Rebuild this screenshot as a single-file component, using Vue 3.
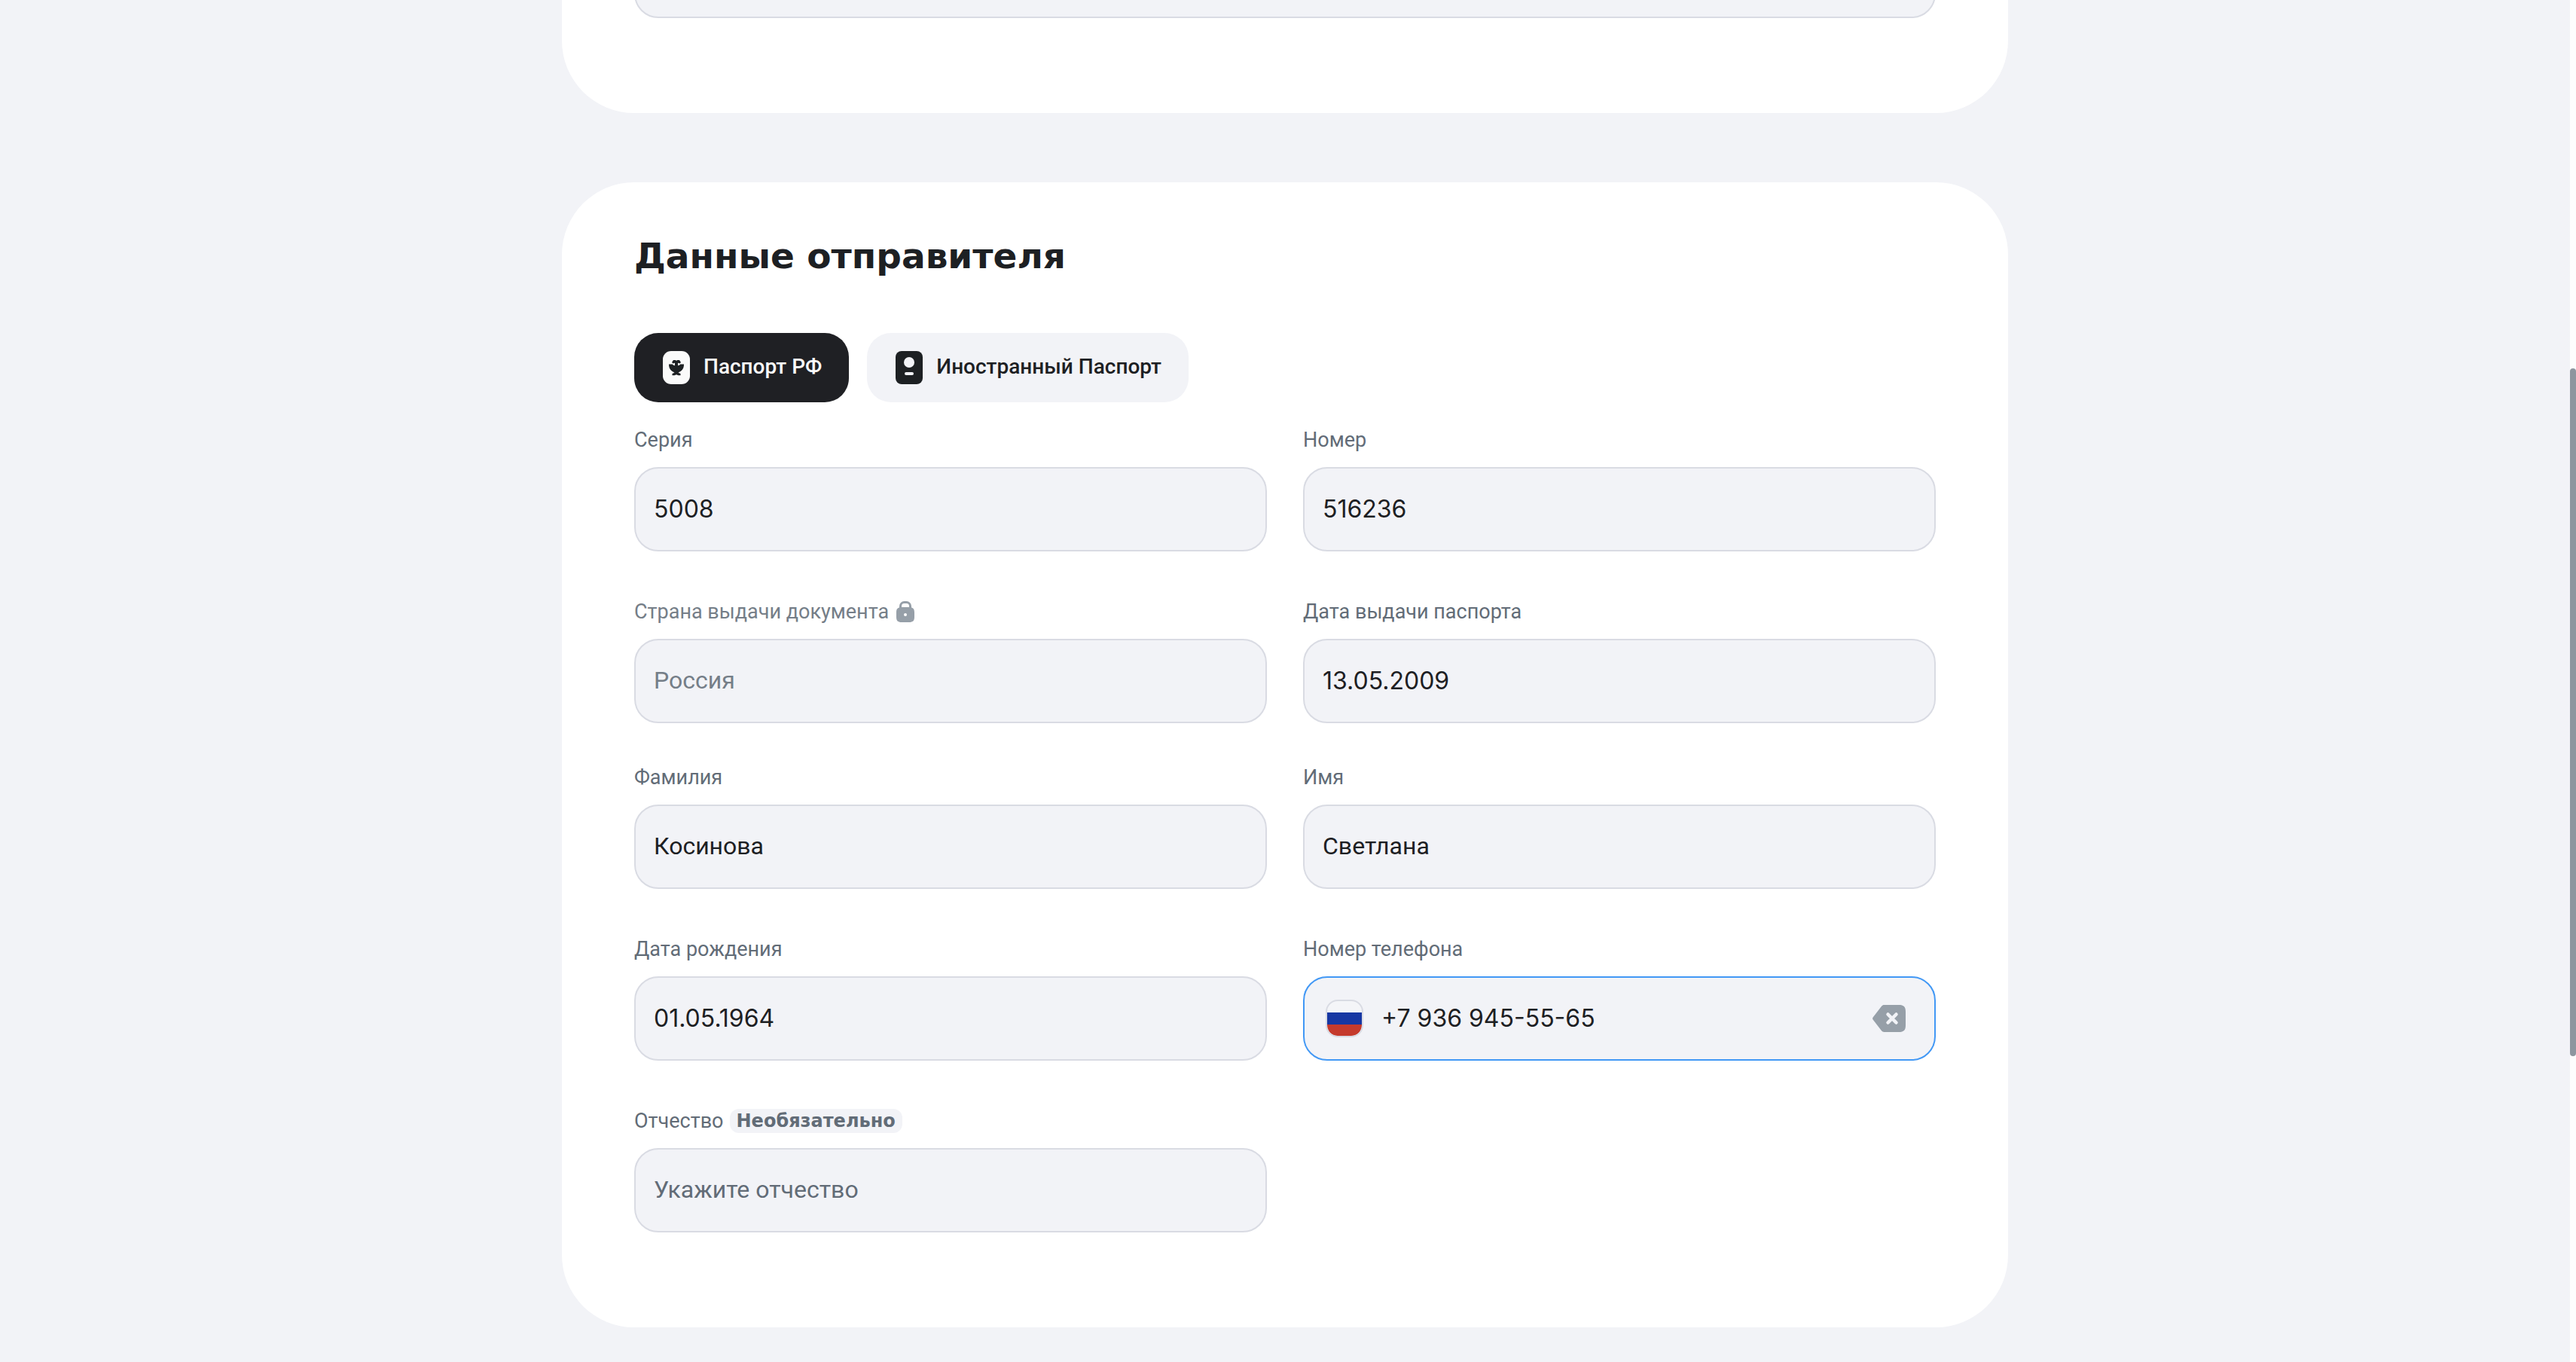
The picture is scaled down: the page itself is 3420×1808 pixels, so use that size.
<script setup>
import { reactive, ref } from 'vue'

const documentType = ref('rf')
const previousField = ref('')
const phone = ref('+7 936 945-55-65')

const documentFields = reactive([
  { id: 'series', label: 'Серия', value: '5008', numeric: true },
  { id: 'number', label: 'Номер', value: '516236', numeric: true },
  { id: 'country', label: 'Страна выдачи документа', value: 'Россия', locked: true },
  { id: 'issued', label: 'Дата выдачи паспорта', value: '13.05.2009', numeric: true },
])

const personFields = reactive([
  { id: 'surname', label: 'Фамилия', value: 'Косинова' },
  { id: 'name', label: 'Имя', value: 'Светлана' },
  { id: 'birthday', label: 'Дата рождения', value: '01.05.1964', numeric: true },
])

const patronymic = ref('')
</script>

<template>
  <div class="page">
    <main class="content">
      <section class="card card-previous">
        <input v-model="previousField" class="control" type="text" aria-label="Данные перевода" />
      </section>

      <section class="card card-sender">
        <h2 class="title">Данные отправителя</h2>

        <div class="tabs">
          <button
            type="button"
            class="tab"
            :class="{ active: documentType === 'rf' }"
            @click="documentType = 'rf'"
          >
            <svg class="tab-icon" viewBox="0 0 48 48" aria-hidden="true">
              <rect x="6" y="2" width="36" height="44" rx="11" fill="#fafafa" />
              <path
                fill="#1d2023"
                d="M20 14h3l1 1 1-1h3l2 3-1.500 1.400-2.500-.6v3.400l2-.4 1.200-1.300H34c0 5-2 8.500-6 10.200l-1.500 1 3 1.300v2.200h-3l-2.500-1-2.500 1h-3v-2.200l3-1.300-1.500-1c-4-1.700-6-5.200-6-10.200h4.800l1.200 1.300 2 .4v-3.400l-2.500.6L18 17z"
              />
            </svg>
            <span class="tab-text">Паспорт РФ</span>
          </button>
          <button
            type="button"
            class="tab"
            :class="{ active: documentType === 'foreign' }"
            @click="documentType = 'foreign'"
          >
            <svg class="tab-icon" viewBox="0 0 48 48" aria-hidden="true">
              <rect x="6" y="2" width="36" height="44" rx="8" fill="#1d2023" />
              <circle cx="24" cy="17" r="7" fill="#f2f3f7" />
              <rect x="18" y="30" width="12" height="4" rx="2" fill="#f2f3f7" />
            </svg>
            <span class="tab-text">Иностранный Паспорт</span>
          </button>
        </div>

        <div class="fields">
          <div v-for="f in documentFields" :key="f.id" class="field">
            <label class="label" :class="{ locked: f.locked }" :for="f.id">
              {{ f.label }}
              <svg v-if="f.locked" class="lock" viewBox="0 2 32 32" aria-hidden="true">
                <path d="M9.500 14v-3.500a5 5 0 0 1 5-5h3a5 5 0 0 1 5 5V14" fill="none" stroke="#969fa8" stroke-width="3" />
                <path
                  fill="#969fa8"
                  fill-rule="evenodd"
                  d="M11 12h10c5 0 7 2 7 7v6c0 5-2 7-7 7H11c-5 0-7-2-7-7v-6c0-5 2-7 7-7zm5 8a2 2 0 1 0 0 4 2 2 0 0 0 0-4z"
                />
              </svg>
            </label>
            <input
              :id="f.id"
              v-model="f.value"
              class="control"
              :class="{ numeric: f.numeric }"
              type="text"
              :disabled="f.locked"
            />
          </div>
        </div>

        <div class="fields fields-person">
          <div v-for="f in personFields" :key="f.id" class="field">
            <label class="label" :for="f.id">{{ f.label }}</label>
            <input
              :id="f.id"
              v-model="f.value"
              class="control"
              :class="{ numeric: f.numeric }"
              type="text"
            />
          </div>

          <div class="field">
            <label class="label" for="phone">Номер телефона</label>
            <div class="control phone">
              <svg class="flag" viewBox="0 0 50 50" aria-hidden="true">
                <clipPath id="flag-shape"><rect x="2" y="2" width="46" height="46" rx="14" /></clipPath>
                <g clip-path="url(#flag-shape)">
                  <rect x="2" y="2" width="46" height="16" fill="#f4f5f8" />
                  <rect x="2" y="17" width="46" height="16" fill="#1637a3" />
                  <rect x="2" y="33" width="46" height="16" fill="#c53a2c" />
                </g>
                <rect x="1" y="1" width="48" height="48" rx="15" fill="none" stroke="#d9dbe3" stroke-width="2" />
              </svg>
              <input id="phone" v-model="phone" class="phone-input" type="tel" />
              <button type="button" class="clear" aria-label="Очистить" @click="phone = ''">
                <svg class="clear-icon" viewBox="0 0 48 48" aria-hidden="true">
                  <path
                    fill="#969fa8"
                    d="M17.500 6H37c6.500 0 9 2.500 9 9v18c0 6.500-2.500 9-9 9H17.500c-1.500 0-2.500-.6-3.500-1.700L3 26c-1.200-1.500-1.200-2.500 0-4L14 7.700C15 6.600 16 6 17.500 6z"
                  />
                  <path d="M22.500 18.500l11 11M33.500 18.500l-11 11" stroke="#f2f3f7" stroke-width="4.500" stroke-linecap="round" />
                </svg>
              </button>
            </div>
          </div>

          <div class="field">
            <label class="label" for="patronymic">
              Отчество
              <span class="badge">Необязательно</span>
            </label>
            <input
              id="patronymic"
              v-model="patronymic"
              class="control"
              type="text"
              placeholder="Укажите отчество"
            />
          </div>
        </div>
      </section>
    </main>

    <div class="scrollbar" aria-hidden="true">
      <div class="scroll-before"></div>
      <div class="scroll-thumb"></div>
      <div class="scroll-after"></div>
    </div>
  </div>
</template>

<style>
body {
  background: #f2f3f7;
}
</style>

<style scoped>
.page {
  display: flex;
  height: 100vh;
  overflow: hidden;
  background: #f2f3f7;
  color: #1d2023;
  font-family: Roboto, "Noto Sans", sans-serif;
}

.content {
  flex: 1;
  min-width: 0;
  display: flex;
  flex-direction: column;
  align-items: center;
  gap: 92px;
  /* the form is scrolled past the previous card */
  margin-top: -200px;
}

.card {
  box-sizing: border-box;
  flex-shrink: 0;
  width: 100%;
  max-width: 1920px;
  background: #fff;
  border-radius: 96px;
}

.card-previous {
  padding: 112px 96px 126px;
}

.card-sender {
  padding: 70px 96px 126px;
}

.title {
  margin: 0;
  font-family: "DejaVu Sans", sans-serif;
  font-size: 47px;
  font-weight: 700;
  line-height: 56px;
}

.tabs {
  display: flex;
  gap: 24px;
  margin-top: 74px;
}

.tab {
  display: flex;
  align-items: center;
  gap: 12px;
  height: 92px;
  padding: 0 36px 0 32px;
  border: 0;
  border-radius: 32px;
  background: #f2f3f7;
  color: #1d2023;
  font-family: inherit;
  font-size: 28px;
  font-weight: 500;
  line-height: 40px;
  cursor: pointer;
}

.tab.active {
  background: #1f2024;
  color: #fafafa;
}

.tab-icon {
  width: 48px;
  height: 48px;
}

.tab-text {
  padding-bottom: 2px;
}

.fields {
  display: grid;
  grid-template-columns: 1fr 1fr;
  gap: 56px 48px;
  margin-top: 26px;
}

.fields-person {
  margin-top: 48px;
}

.field {
  display: flex;
  flex-direction: column;
  gap: 12px;
  min-width: 0;
}

.label {
  display: flex;
  align-items: center;
  gap: 8px;
  height: 48px;
  color: #626c77;
  font-size: 27px;
  line-height: 48px;
}

.label.locked {
  gap: 6px;
  color: #757e88;
}

.lock {
  width: 32px;
  height: 32px;
}

.badge {
  padding: 0 9px;
  border-radius: 12px;
  background: #f2f3f7;
  font-family: "DejaVu Sans", sans-serif;
  font-size: 24px;
  font-weight: 700;
  line-height: 32px;
}

.control {
  box-sizing: border-box;
  width: 100%;
  height: 112px;
  padding: 0 24px 2px;
  border: 2px solid #d9dbe3;
  border-radius: 32px;
  outline: 0;
  background: #f2f3f7;
  color: #1d2023;
  font-family: inherit;
  font-size: 32px;
}

.control:disabled {
  color: #757e88;
}

.control::placeholder {
  color: #626c77;
  opacity: 1;
}

.control.numeric,
.phone-input {
  font-family: Inter, sans-serif;
}

.phone {
  display: flex;
  align-items: center;
  gap: 24px;
  padding: 0 36px 0 28px;
  border-color: #4298f5;
}

.flag {
  flex-shrink: 0;
  width: 50px;
  height: 50px;
}

.phone-input {
  flex: 1;
  min-width: 0;
  height: 108px;
  box-sizing: border-box;
  padding: 0 0 2px;
  border: 0;
  outline: 0;
  background: transparent;
  color: #1d2023;
  font-size: 32px;
}

.clear {
  display: flex;
  padding: 0;
  border: 0;
  background: none;
  cursor: pointer;
}

.clear-icon {
  width: 48px;
  height: 48px;
}

.scrollbar {
  display: flex;
  flex-direction: column;
  width: 8px;
  background: #fdfdfd;
}

.scroll-before {
  flex: 489;
}

.scroll-thumb {
  flex: 913;
  border-radius: 4px;
  background: #8d969f;
}

.scroll-after {
  flex: 406;
}
</style>
